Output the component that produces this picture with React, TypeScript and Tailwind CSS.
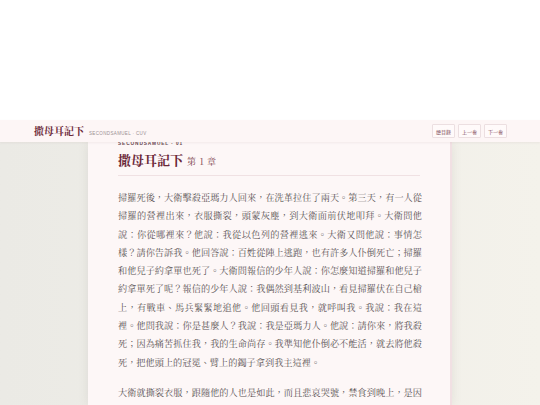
import React from 'react';

const serif = { fontFamily: '"Noto Serif CJK TC", "Noto Serif TC", "Liberation Serif", "Noto Sans CJK TC", serif' };

const paragraphs = [
  '掃羅死後，大衛擊殺亞瑪力人回來，在洗革拉住了兩天。第三天，有一人從掃羅的營裡出來，衣服撕裂，頭蒙灰塵，到大衛面前伏地叩拜。大衛問他說：你從哪裡來？他說：我從以色列的營裡逃來。大衛又問他說：事情怎樣？請你告訴我。他回答說：百姓從陣上逃跑，也有許多人仆倒死亡；掃羅和他兒子約拿單也死了。大衛問報信的少年人說：你怎麼知道掃羅和他兒子約拿單死了呢？報信的少年人說：我偶然到基利波山，看見掃羅伏在自己槍上，有戰車、馬兵緊緊地追他。他回頭看見我，就呼叫我。我說：我在這裡。他問我說：你是甚麼人？我說：我是亞瑪力人。他說：請你來，將我殺死；因為痛苦抓住我，我的生命尚存。我準知他仆倒必不能活，就去將他殺死，把他頭上的冠冕、臂上的鐲子拿到我主這裡。',
  '大衛就撕裂衣服，跟隨他的人也是如此，而且悲哀哭號，禁食到晚上，是因為掃羅和他兒子約拿單，並耶和華的百姓以色列家的人倒在刀下。',
];

const NavButton: React.FC<{ label: string }> = ({ label }) => (
  <button className="w-[23px] h-[14px] flex items-center justify-center border border-[#ecdfe1] bg-[#fffafa] text-[5px] leading-none text-[#6b2a39] rounded-[1px]">
    {label}
  </button>
);

export default function App() {
  return (
    <div className="w-[540px] h-[405px] overflow-hidden flex flex-col bg-white" style={serif}>
      <div className="h-[120px] shrink-0 bg-white" />

      <header className="relative z-10 h-[22px] shrink-0 flex items-center justify-between pl-[34px] pr-[33px] bg-[#fdf6f6] shadow-[0_1px_2px_rgba(120,80,90,0.08)]">
        <div className="flex items-baseline gap-[5px]">
          <span className="text-[10px] font-bold text-[#6b2737] leading-none">撒母耳記下</span>
          <span className="text-[4.5px] tracking-[0.08em] text-[#9a9092] leading-none" style={{ fontFamily: '"Liberation Sans", sans-serif' }}>
            SECONDSAMUEL · CUV
          </span>
        </div>
        <div className="flex gap-[3px]">
          <NavButton label="總目錄" />
          <NavButton label="上一卷" />
          <NavButton label="下一卷" />
        </div>
      </header>

      <div className="flex-1 overflow-hidden flex bg-gradient-to-r from-[#ebeae5] via-[#efeee8] to-[#f4f2eb]">
        <div className="w-[88px] shrink-0" />
        <article className="w-[364px] shrink-0 bg-[#fdf7f7] border-r-2 border-[#f1e0e3] shadow-[0_0_10px_rgba(90,80,70,0.10)] px-[30px]">
          <div className="-mt-[3px] h-[10px] leading-[10px] text-[4.8px] font-bold tracking-[0.18em] text-[#6b4a52]" style={{ fontFamily: '"Liberation Sans", sans-serif' }}>
            SECONDSAMUEL · 01
          </div>
          <div className="mt-[2px] pb-[4px] border-b border-[#f0e1e3] flex items-baseline gap-[4px]">
            <h1 className="text-[13px] font-bold leading-[18px] text-[#6b2737]">撒母耳記下</h1>
            <span className="text-[9px] tracking-[0.06em] text-[#7a3c4a] leading-[18px]">第 1 章</span>
          </div>
          <div className="mt-[12px] w-[304px] text-[9.2px] leading-[18.3px] text-[#5a5354] text-justify flex flex-col gap-[12px]">
            {paragraphs.map((p, i) => (
              <p key={i}>{p}</p>
            ))}
          </div>
        </article>
        <div className="flex-1" />
      </div>
    </div>
  );
}
